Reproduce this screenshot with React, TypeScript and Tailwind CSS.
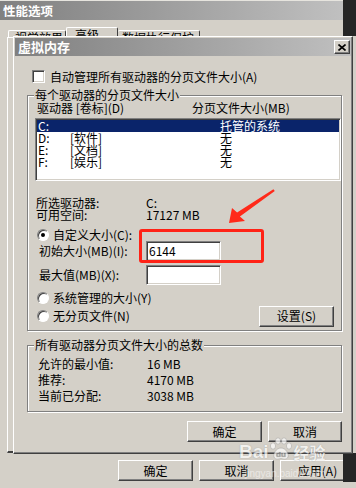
import React from "react";

const raised =
  "bg-[#d4d0c8] border border-t-white border-l-white border-r-[#404040] border-b-[#404040] shadow-[inset_-1px_-1px_#808080]";
const sunken =
  "bg-white border border-t-[#808080] border-l-[#808080] border-r-white border-b-white shadow-[inset_1px_1px_#404040,inset_-1px_-1px_#d4d0c8]";
const groupBox = "border border-[#808080] shadow-[inset_1px_1px_#fff,1px_1px_#fff]";

function Button({ children, className }: { children: React.ReactNode; className: string }) {
  return (
    <div className={`${raised} ${className} h-[21px] shrink-0 flex items-center justify-center`}>
      {children}
    </div>
  );
}

function Radio({ checked }: { checked?: boolean }) {
  return (
    <div className="w-[12px] h-[12px] shrink-0 rounded-full bg-white border border-t-[#808080] border-l-[#808080] border-r-white border-b-white shadow-[inset_1px_1px_#404040] flex items-center justify-center">
      {checked && <div className="w-[4px] h-[4px] rounded-full bg-black" />}
    </div>
  );
}

const drives = [
  { letter: "C:", label: "", size: "托管的系统", selected: true },
  { letter: "D:", label: "[软件]", size: "无" },
  { letter: "E:", label: "[文档]", size: "无" },
  { letter: "F:", label: "[娱乐]", size: "无" },
];

const totals = [
  { label: "允许的最小值:", value: "16 MB" },
  { label: "推荐:", value: "4170 MB" },
  { label: "当前已分配:", value: "3038 MB" },
];

export default function App() {
  return (
    <div className="relative w-[356px] h-[488px] flex overflow-hidden bg-[#d4d0c8] text-black text-[12px] leading-[12px] font-['Noto_Sans_CJK_SC','Noto_Sans',sans-serif]">
      {/* 性能选项 window */}
      <div className="w-[343px] h-full shrink-0 flex flex-col overflow-hidden">
        <div className="h-[20px] border-t border-t-[#e6e4de] bg-linear-to-r from-[#808080] to-[#c0c0c0] flex items-center pl-[3px] text-white font-bold text-[12.5px]">
          性能选项
        </div>
        {/* tabs, mostly hidden under the dialog */}
        <div className="h-[17px] flex items-end pl-[8px] whitespace-nowrap">
          <div className="w-[58px] h-[7px] overflow-hidden border-t border-l border-r border-t-white border-l-white border-r-[#404040] rounded-t-[2px] pl-[6px] pt-[1px]">
            <div className="h-[5px] overflow-hidden">视觉效果</div>
          </div>
          <div className="w-[52px] h-[10px] overflow-hidden border-t border-l border-r border-t-white border-l-white border-r-[#404040] rounded-t-[2px] pl-[8px] pt-[1px]">
            <div className="h-[8px] overflow-hidden">高级</div>
          </div>
          <div className="w-[82px] h-[7px] overflow-hidden border-t border-r border-t-white border-r-[#404040] rounded-t-[2px] pl-[4px] pt-[1px]">
            <div className="h-[5px] overflow-hidden">数据执行保护</div>
          </div>
        </div>
        <div className="ml-[7px] h-[416px] border-t border-l border-b-2 border-t-white border-l-white border-b-[#404040]" />
        <div className="flex gap-[6px] pl-[118px] pt-[7px]">
          <Button className="w-[75px]">确定</Button>
          <Button className="w-[75px]">取消</Button>
          <Button className="w-[75px]">应用(A)</Button>
        </div>
      </div>

      {/* desktop strip on the right */}
      <div className="w-[13px] shrink-0 flex flex-col">
        <div className="h-[36px] bg-[#262626]" />
        <div className="h-[417px]" />
        <div className="h-[29px] bg-[#262626]" />
      </div>

      {/* 虚拟内存 dialog */}
      <div className="absolute left-[13px] top-[36px] w-[340px] h-[418px] p-[1px] flex flex-col bg-[#d4d0c8] border border-t-white border-l-white border-r-[#404040] border-b-[#404040] shadow-[inset_-1px_-1px_#808080]">
        <div className="h-[18px] shrink-0 bg-linear-to-r from-[#808080] to-[#c0c0c0] flex items-center justify-between pl-[3px] pr-[1px]">
          <span className="text-white font-bold text-[13px]">虚拟内存</span>
          <div className={`${raised} w-[16px] h-[14px] flex items-center justify-center`}>
            <svg width="8" height="7" viewBox="0 0 8 7">
              <path d="M0.5 0.5 L7.5 6.5 M7.5 0.5 L0.5 6.5" stroke="#000" strokeWidth="1.6" />
            </svg>
          </div>
        </div>

        <div className="flex flex-col pl-[12px] pr-[9px]">
          <div className="mt-[14px] h-[13px] flex items-center gap-[5px] pl-[5px]">
            <div className={`${sunken} w-[13px] h-[13px] shrink-0`} />
            <span>自动管理所有驱动器的分页文件大小(A)</span>
          </div>

          <fieldset className={`mt-[6px] ${groupBox}`}>
            <legend className="ml-[6px] px-[1px] bg-[#d4d0c8] leading-[12px]">每个驱动器的分页文件大小</legend>
            <div className="flex flex-col pl-[7px] pt-[1px] pb-[4px]">
              <div className="flex h-[12px] items-center pl-[2px]">
                <span className="w-[155px]">驱动器 [卷标](D)</span>
                <span>分页文件大小(MB)</span>
              </div>
              <div className={`${sunken} mt-[4px] h-[63px] p-[1px] flex flex-col`}>
                {drives.map((d) => (
                  <div
                    key={d.letter}
                    className={`flex h-[12px] items-center shrink-0 ${d.selected ? "bg-[#0a246a] text-white" : ""}`}
                  >
                    <span className="w-[33px] pl-[1px]">{d.letter}</span>
                    <span className="w-[150px]">{d.label}</span>
                    <span>{d.size}</span>
                  </div>
                ))}
              </div>

              <div className="mt-[16px] flex h-[12px] items-center pl-[1px]">
                <span className="w-[110px]">所选驱动器:</span>
                <span>C:</span>
              </div>
              <div className="flex h-[12px] items-center pl-[1px]">
                <span className="w-[110px]">可用空间:</span>
                <span>17127 MB</span>
              </div>

              <div className="mt-[8px] flex h-[12px] items-center gap-[4px] pl-[2px]">
                <Radio checked />
                <span>自定义大小(C):</span>
              </div>
              <div className="flex h-[20px] items-center pl-[4px]">
                <span className="w-[107px]">初始大小(MB)(I):</span>
                <div className={`${sunken} w-[75px] h-[20px] flex items-center pl-[2px]`}>6144</div>
              </div>
              <div className="mt-[4px] flex h-[20px] items-center pl-[4px]">
                <span className="w-[107px]">最大值(MB)(X):</span>
                <div className={`${sunken} w-[75px] h-[20px]`} />
              </div>

              <div className="mt-[7px] flex h-[12px] items-center gap-[4px] pl-[2px]">
                <Radio />
                <span>系统管理的大小(Y)</span>
              </div>
              <div className="mt-[2px] flex h-[20px] items-center justify-between pl-[2px] pr-[7px]">
                <div className="flex items-center gap-[4px]">
                  <Radio />
                  <span>无分页文件(N)</span>
                </div>
                <Button className="w-[75px] h-[20px]">设置(S)</Button>
              </div>
            </div>
          </fieldset>

          <fieldset className={`mt-[8px] ${groupBox}`}>
            <legend className="ml-[6px] px-[1px] bg-[#d4d0c8] leading-[12px]">所有驱动器分页文件大小的总数</legend>
            <div className="flex flex-col pl-[10px] pt-[5px] pb-[7px]">
              {totals.map((t) => (
                <div key={t.label} className="flex h-[16px] items-center">
                  <span className="w-[109px]">{t.label}</span>
                  <span>{t.value}</span>
                </div>
              ))}
            </div>
          </fieldset>

          <div className="mt-[9px] flex justify-end gap-[6px]">
            <Button className="w-[75px]">确定</Button>
            <Button className="w-[74px]">取消</Button>
          </div>
        </div>
      </div>

      {/* red highlight + arrow annotation */}
      <div className="absolute left-[139px] top-[229px] w-[125px] h-[34px] border-[3px] border-[#ff2216] rounded-[3px]" />
      <svg className="absolute left-[225px] top-[186px]" width="55" height="42" viewBox="0 0 55 42">
        <polygon points="4,37 7,22 12.1,26.4 48.4,3.2 49.8,4.9 14.9,30.6 20,35" fill="#ff2a1a" />
      </svg>

      {/* baidu watermark */}
      <div className="absolute left-[239px] top-[437px] flex items-end opacity-70 text-white [text-shadow:0_0_1px_#777]">
        <span className="font-['Liberation_Sans',sans-serif] font-bold text-[19px] leading-[19px]">Bai</span>
        <svg width="26" height="24" viewBox="0 0 26 24" className="-ml-[1px]">
          <g fill="#fff" stroke="#999" strokeWidth="0.6">
            <ellipse cx="5" cy="9" rx="2.6" ry="3.2" />
            <ellipse cx="10" cy="4" rx="2.6" ry="3.2" />
            <ellipse cx="16" cy="4" rx="2.6" ry="3.2" />
            <ellipse cx="21" cy="9" rx="2.6" ry="3.2" />
            <path d="M13 11 C8 11 5 17 6 20 C7 23 11 22 13 21.5 C15 22 19 23 20 20 C21 17 18 11 13 11 Z" />
          </g>
          <text x="8" y="20" fontSize="8" fill="#999" fontFamily="Liberation Sans, sans-serif" fontWeight="bold">du</text>
        </svg>
        <span className="text-[16px] leading-[18px] font-bold">经验</span>
      </div>
      <div className="absolute left-[245px] top-[469px] text-[10px] leading-[10px] text-white opacity-50 font-['Liberation_Sans',sans-serif]">
        jingyan.baidu.com
      </div>
    </div>
  );
}
